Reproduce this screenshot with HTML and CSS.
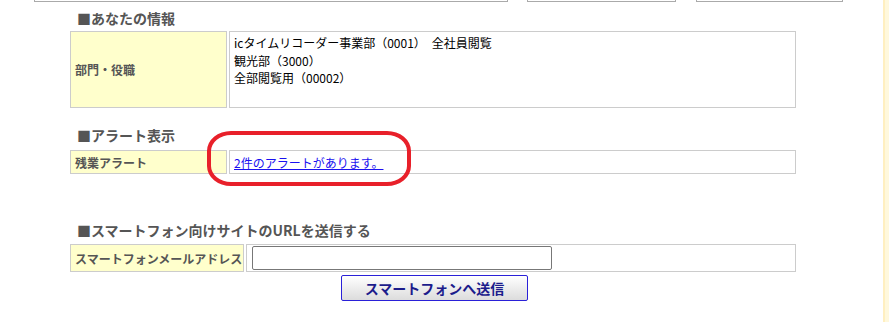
FILE: index.html
```html
<!DOCTYPE html>
<html lang="ja">
<head>
    <meta charset="UTF-8">
    <meta name="viewport" content="width=device-width, initial-scale=1.0">
    <title>マイページ</title>
    <link rel="stylesheet" href="styles.css">
</head>
<body>
    <div class="page">
        <div class="main">
            <div class="top-boxes">
                <div class="top-box box-a"></div>
                <div class="top-box box-b"></div>
                <div class="top-box box-c"></div>
            </div>

            <div class="content">
                <h2 class="sec-title first">■あなたの情報</h2>
                <div class="row row-tall">
                    <div class="label">部門・役職</div>
                    <div class="value value-top">
                        <p>icタイムリコーダー事業部（0001）　全社員閲覧</p>
                        <p>観光部（3000）</p>
                        <p>全部閲覧用（00002）</p>
                    </div>
                </div>

                <div class="alert-block">
                    <h2 class="sec-title">■アラート表示</h2>
                    <div class="row row-short">
                        <div class="label">残業アラート</div>
                        <div class="value"><a href="#">2件のアラートがあります。</a></div>
                    </div>
                    <!-- red mark drawn over the alert link -->
                    <div class="red-mark"></div>
                </div>

                <h2 class="sec-title gap-big">■スマートフォン向けサイトのURLを送信する</h2>
                <div class="row row-mail">
                    <div class="label label-wide">スマートフォンメールアドレス</div>
                    <div class="value value-input">
                        <input type="text" class="mail-input">
                    </div>
                </div>
                <div class="btn-line">
                    <button type="button" class="send-btn">スマートフォンへ送信</button>
                </div>
            </div>
        </div>
        <div class="side-strip"></div>
    </div>
</body>
</html>
```

FILE: styles.css
```css
body {
    margin: 0;
    padding: 0;
    background-color: #fff;
    font-family: "Noto Sans CJK JP", sans-serif;
    color: #000;
}

.page {
    display: flex;
    width: 889px;
    height: 322px;
    overflow: hidden;
}

.main {
    flex: 1;
}

.side-strip {
    width: 4px;
    background-color: #fff8dc;
    border-left: 2px solid #ffefc0;
}

.top-boxes {
    display: flex;
    padding-left: 34px;
}

.top-box {
    height: 1px;
    border: 1px solid #aaa;
    border-top: none;
}

.box-a {
    width: 472px;
}

.box-b {
    width: 147px;
    margin-left: 19px;
}

.box-c {
    width: 145px;
    margin-left: 20px;
}

.content {
    margin-left: 70px;
    width: 726px;
}

.sec-title {
    margin: 17px 0 5px 0;
    padding-left: 7px;
    font-size: 14px;
    line-height: 20px;
    font-weight: bold;
    color: #555;
}

.sec-title.first {
    margin-top: 6px;
    margin-bottom: 3px;
}

.sec-title.gap-big {
    margin-top: 46px;
    margin-bottom: 4px;
}

.row {
    display: flex;
    gap: 2px;
}

.label {
    width: 151px;
    padding-left: 4px;
    background-color: #ffffcc;
    border: 1px solid #ccc;
    font-size: 12px;
    font-weight: bold;
    color: #555;
    display: flex;
    align-items: center;
}

.label-wide {
    width: 168px;
}

.value {
    flex: 1;
    border: 1px solid #ccc;
    padding-left: 4px;
    font-size: 12px;
    display: flex;
    align-items: center;
}

.value-top {
    display: block;
    padding-top: 2px;
}

.value-top p {
    margin: 0;
    line-height: 17.5px;
}

.row-tall {
    height: 77px;
}

.row-short {
    height: 24px;
}

.row-mail {
    height: 28px;
}

.value a {
    color: #1a10f0;
    text-decoration: underline;
}

.value-input {
    padding-left: 5px;
}

.mail-input {
    width: 300px;
    height: 24px;
    box-sizing: border-box;
    border: 1px solid #777;
    border-radius: 2px;
    margin: 0;
    padding: 0 3px;
}

.alert-block {
    position: relative;
}

.red-mark {
    position: absolute;
    left: 137px;
    top: 6px;
    width: 196px;
    height: 47px;
    border: 4px solid #e8202a;
    border-radius: 24px / 20px;
}

.btn-line {
    display: flex;
    justify-content: center;
    margin-top: 3px;
    padding-left: 3px;
}

.send-btn {
    width: 187px;
    height: 26px;
    border: 1px solid #2a20d8;
    border-radius: 2px;
    background: linear-gradient(#ffffff, #dcdcdc);
    color: #1c1c8c;
    font-family: "Noto Sans CJK JP", sans-serif;
    font-size: 14px;
    font-weight: bold;
    padding: 0;
}
```
